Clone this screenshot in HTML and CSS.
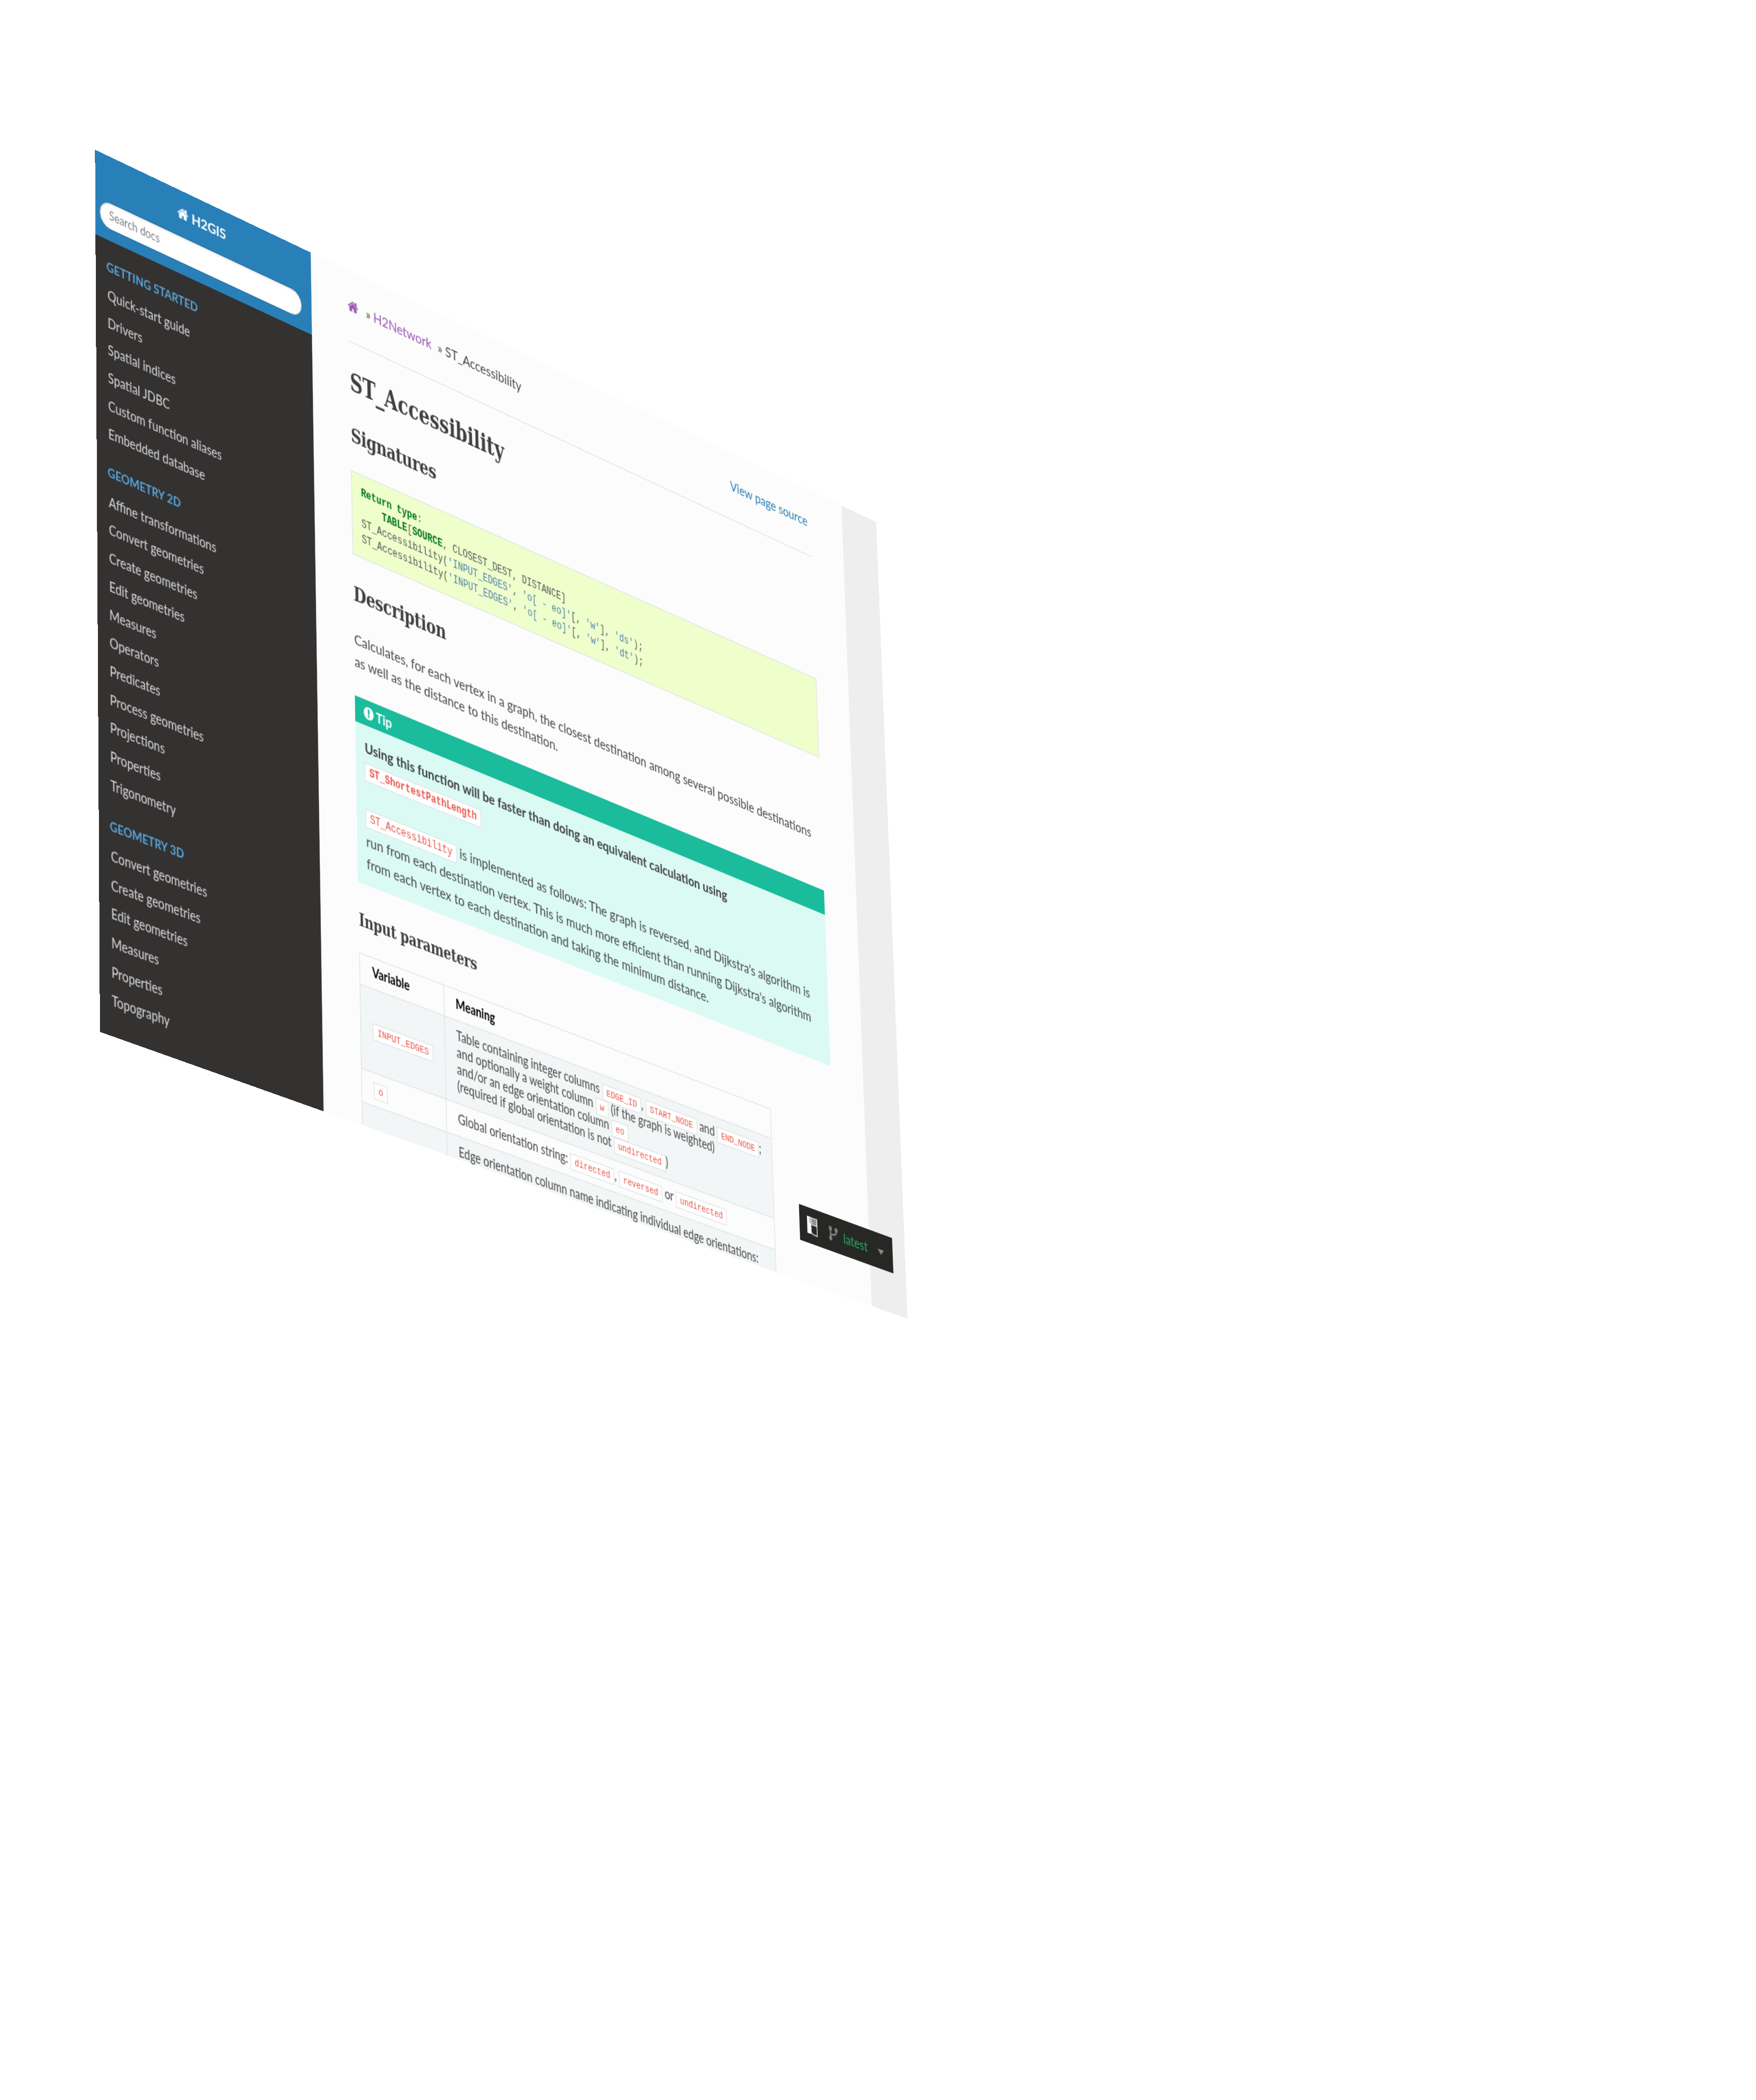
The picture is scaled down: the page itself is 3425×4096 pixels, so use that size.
FILE: index.html
```html
<!DOCTYPE html>
<html lang="en">
<head>
<meta charset="utf-8">
<title>ST_Accessibility — H2GIS</title>
<link rel="stylesheet" href="styles.css">
</head>
<body>
<svg class="defs" width="0" height="0" aria-hidden="true">
  <symbol id="home" viewBox="0 0 1664 1792"><path d="M1408 992v480q0 26-19 45t-45 19h-384v-384h-256v384h-384q-26 0-45-19t-19-45v-480q0-1 .5-3t.5-3l575-474 575 474q1 2 1 6zm223-69l-62 74q-8 9-21 11h-3q-13 0-21-7l-692-577-692 577q-12 8-24 7-13-2-21-11l-62-74q-8-10-7-23.5t11-21.5l719-599q32-26 76-26t76 26l244 204v-195q0-14 9-23t23-9h192q14 0 23 9t9 23v408l219 182q10 8 11 21.5t-7 23.5z"/></symbol>
  <symbol id="alert" viewBox="128 0 1536 1792"><path d="M896 128q209 0 385.500 103t279.500 279.500 103 385.500-103 385.500-279.500 279.500-385.500 103-385.500-103-279.500-279.500-103-385.500 103-385.500 279.500-279.500 385.500-103zm128 1247v-190q0-14-9-23.500t-22-9.500h-192q-13 0-23 10t-10 23v190q0 13 10 23t23 10h192q13 0 22-9.500t9-23.500zm-2-344l18-621q0-12-10-18-10-8-24-8h-220q-14 0-24 8-10 6-10 18l17 621q0 10 10 17.500t24 7.500h185q14 0 23.500-7.500t10.500-17.500z"/></symbol>
</svg>
<div class="page">
  <nav class="side">
    <div class="side-search">
      <a class="brand"><svg class="icon-home"><use href="#home"/></svg><span>H2GIS</span></a>
      <div class="search">Search docs</div>
    </div>
    <div class="menu">
      <header>Getting started</header>
      <ul>
        <li>Quick-start guide</li>
        <li>Drivers</li>
        <li>Spatial indices</li>
        <li>Spatial JDBC</li>
        <li>Custom function aliases</li>
        <li>Embedded database</li>
      </ul>
      <header>Geometry 2D</header>
      <ul>
        <li>Affine transformations</li>
        <li>Convert geometries</li>
        <li>Create geometries</li>
        <li>Edit geometries</li>
        <li>Measures</li>
        <li>Operators</li>
        <li>Predicates</li>
        <li>Process geometries</li>
        <li>Projections</li>
        <li>Properties</li>
        <li>Trigonometry</li>
      </ul>
      <header>Geometry 3D</header>
      <ul>
        <li>Convert geometries</li>
        <li>Create geometries</li>
        <li>Edit geometries</li>
        <li>Measures</li>
        <li>Properties</li>
        <li>Topography</li>
      </ul>
    </div>
  </nav>
  <main class="content">
    <div class="crumbs">
      <a class="visited"><svg class="icon-home"><use href="#home"/></svg></a>
      <span class="sep">»</span>
      <a class="visited">H2Network</a>
      <span class="sep">»</span>
      <span>ST_Accessibility</span>
      <a class="source">View page source</a>
    </div>
    <hr>
    <h1>ST_Accessibility</h1>
    <h2>Signatures</h2>
    <pre><b>Return</b> <b>type</b>:
    <b>TABLE</b>[<b>SOURCE</b>, CLOSEST_DEST, DISTANCE]
ST_Accessibility(<i>'INPUT_EDGES'</i>, <i>'o[ - eo]'</i>[, <i>'w'</i>], <i>'ds'</i>);
ST_Accessibility(<i>'INPUT_EDGES'</i>, <i>'o[ - eo]'</i>[, <i>'w'</i>], <i>'dt'</i>);</pre>
    <h2 class="after-code">Description</h2>
    <p class="intro">Calculates, for each vertex in a graph, the closest destination among several possible destinations<br>as well as the distance to this destination.</p>
    <section class="tip">
      <div class="tip-title"><svg class="icon-alert"><use href="#alert"/></svg><span>Tip</span></div>
      <p><strong>Using this function will be faster than doing an equivalent calculation using<br><code>ST_ShortestPathLength</code></strong></p>
      <p><code>ST_Accessibility</code> is implemented as follows: The graph is reversed, and Dijkstra's algorithm is<br>run from each destination vertex. This is much more efficient than running Dijkstra's algorithm<br>from each vertex to each destination and taking the minimum distance.</p>
    </section>
    <h3>Input parameters</h3>
    <table>
      <thead><tr><th class="col-var">Variable</th><th>Meaning</th></tr></thead>
      <tbody>
        <tr class="odd tall"><td><code>INPUT_EDGES</code></td><td>Table containing integer columns <code>EDGE_ID</code>, <code>START_NODE</code> and <code>END_NODE</code>;<br>and optionally a weight column <code>w</code> (if the graph is weighted)<br>and/or an edge orientation column <code>eo</code><br>(required if global orientation is not <code>undirected</code>)</td></tr>
        <tr><td><code>o</code></td><td>Global orientation string: <code>directed</code>, <code>reversed</code> or <code>undirected</code></td></tr>
        <tr class="odd"><td></td><td>Edge orientation column name indicating individual edge orientations:</td></tr>
      </tbody>
    </table>
  </main>
  <div class="flyout">
    <svg class="badge" viewBox="0 0 16 20"><path fill="#fff" d="M0 0h6.500v19H0z"/><path fill="#bbb" d="M6.500 0H16v9H6.500z"/><path fill="#272725" d="M6.500 10h8v9.500l-6-.8z"/><path fill="none" stroke="#ddd" stroke-width="1.300" d="M15.300 0v19.400L8 18.600l-1.500-1.800"/><path stroke="#555" stroke-width=".9" d="M8 2.500h6M8 4.500h6M9 6.500h5M3.500 2h2M3.500 4h2M3.500 6h2"/></svg>
    <svg class="fork" viewBox="0 0 14 16"><g fill="none" stroke="#888" stroke-width="2"><circle cx="2.500" cy="2.500" r="1.500"/><circle cx="2.500" cy="13.500" r="1.500"/><circle cx="11.500" cy="2.800" r="1.500"/><path d="M2.500 4v8M11.500 4.500c0 3.500-2 4-4.500 4.300-2.500.3-4.500.7-4.500 2.200"/></g></svg>
    <span class="version">latest</span>
    <svg class="caret" viewBox="0 0 10 6"><path fill="#888" d="M0 0h10L5 6z"/></svg>
  </div>
</div>
</body>
</html>
```
FILE: styles.css
```css
* { box-sizing: border-box; }
html { height: 4096px; overflow: hidden; background: #fff; }
body { height: 4096px; margin: 0; font-family: Lato, "Liberation Sans", sans-serif; font-size: 16px; line-height: 24px; color: #484848; }
.defs { display: block; height: 0; }

.page {
  position: relative;
  display: flex;
  width: 1150px;
  height: 928px;
  overflow: hidden;
  background: #eee;
  transform-origin: 0 0;
  transform: matrix3d(1.504127, 0.738282, 0, 0.0001049452, 0.0024256, 1.772892, 0, -0.0000403502, 0, 0, 1, 0, 185.373, 292.022, 0, 1);
}

/* Sidebar */
.side { flex: none; width: 292px; height: 100%; background: #343131; }
.side-search { height: 92px; padding: 12.5px 13px 12.5px 5px; background: #2980b9; text-align: center; }
.brand { display: flex; align-items: center; justify-content: center; gap: 4px; height: 24px; margin-bottom: 13.5px; color: #fff; font-weight: bold; }
.icon-home { width: 15px; height: 16px; fill: currentColor; }
.search { height: 29.5px; padding: 0 12px; border: 1px solid #2472a4; border-radius: 50px; background: #fff; box-shadow: inset 0 1px 3px #ddd; text-align: left; font-size: 12.8px; line-height: 27px; color: #808080; }
.menu { padding-top: 1.9px; }
.menu header { height: 32.4px; margin-top: 10.9px; padding-left: 14.1px; font-size: 13.7px; line-height: 32px; font-weight: bold; text-transform: uppercase; color: #55a5d9; white-space: nowrap; }
.menu ul { margin: 0; padding: 0; list-style: none; }
.menu li { height: 29.72px; padding: 5.86px 15.3px; font-size: 14.4px; line-height: 18px; color: #d9d9d9; }

/* Document */
.content { flex: none; width: 801px; height: 100%; padding: 26.8px 52.5px 0 52.4px; background: #fcfcfc; }
.crumbs { display: flex; height: 24px; }
.visited { color: #9b59b6; }
.crumbs .icon-home { display: block; margin: 4px 0 0 -1px; }
.sep { margin: 0 4px 0 9px; }
.visited + .sep:nth-child(2) { margin-left: 10px; }
.source { margin-left: auto; padding-right: 4.6px; color: #2980b9; }
hr { height: 1px; margin: 28.5px 0 24px; border: 0; background: #e1e4e5; }
h1, h2, h3 { margin: 0; font-family: "Roboto Slab", "DejaVu Serif Condensed", "DejaVu Serif", serif; font-stretch: condensed; font-weight: bold; color: #404040; white-space: nowrap; }
h1 { font-size: 27.4px; line-height: 40px; }
h2 { margin-top: 21px; font-size: 22.8px; line-height: 36px; letter-spacing: -.4px; }
h2.after-code { margin-top: 23.7px; letter-spacing: -.3px; }
h3 { margin-top: 25px; font-size: 19px; line-height: 28px; letter-spacing: -.2px; }
pre { margin: 22px 0 0; padding: 12px; border: 1px solid #e1e4e5; background: #efc; color: #555; font: 12px/16.8px "Liberation Mono", monospace; }
pre b { color: #007020; }
pre i { font-style: normal; color: #4f7ca8; }
p { margin: 0 0 22.5px; white-space: nowrap; }
.intro { margin: 19.8px 0 25.9px; }

.tip { height: 201px; padding: 0 12px; background: #dbfaf4; }
.tip-title { display: flex; align-items: center; gap: 3px; height: 28.4px; margin: 0 -12px 12px; padding: 0 12px 0 11.4px; background: #1abc9c; color: #fff; font-weight: bold; }
.icon-alert { width: 14px; height: 16px; fill: currentColor; }
strong { color: #404040; }
code { padding: 2px 5px; border: 1px solid #e1e4e5; background: #fff; color: #e9564a; font-family: "Liberation Mono", monospace; font-size: 12px; }

table { width: 599.6px; margin-top: 21.9px; border-collapse: collapse; border: 1px solid #e1e4e5; font-size: 14.4px; line-height: 18px; white-space: nowrap; }
th, td { padding: 7px 16px 9px; border-left: 1px solid #e1e4e5; border-bottom: 1px solid #e1e4e5; text-align: left; vertical-align: middle; }
th { padding: 6px 16px 8px; color: #000; }
.col-var { width: 116.5px; }
td code { font-size: 10.8px; line-height: 0; }
tr { height: 34.9px; }
thead tr { height: 33.1px; }
.tall { height: 89.2px; }
.odd { background: #f3f6f6; }

/* Version switcher pinned over the page */
.flyout { position: absolute; left: 983px; top: 841.5px; display: flex; align-items: center; width: 147px; height: 40px; padding: 0 14px 0 12px; background: #272725; }
.badge { width: 16px; height: 20px; }
.fork { width: 14px; height: 16px; margin-left: 17.5px; }
.version { margin-left: 9px; color: #27ae60; }
.caret { width: 10px; height: 6px; margin: 3px 0 0 auto; }
```
